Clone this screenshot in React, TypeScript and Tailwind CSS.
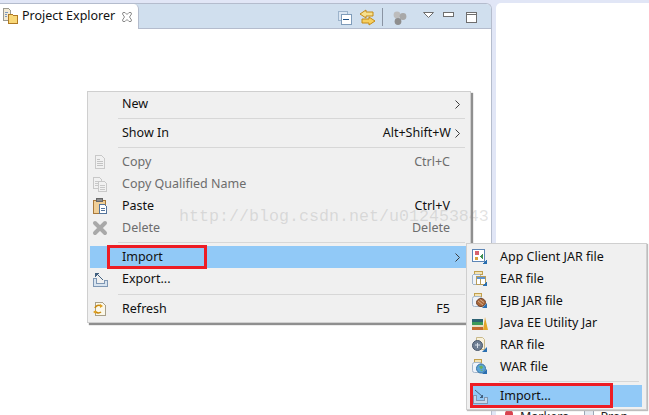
import React from "react";

const CornerArrow = () => <path d="M15 15 h-5 l5 -5 z" fill="#2a6fb0" />;

const PageIcon = ({ dim = false }: { dim?: boolean }) => (
  <svg width="16" height="16" viewBox="0 0 16 16" shapeRendering="crispEdges">
    <g opacity={dim ? 0.45 : 1}>
      <path d="M3.5 1.5 h6 l3 3 v10 h-9 z" fill="#f4f4f4" stroke="#9a9a9a" />
      <path d="M5 5h3M5 7h6M5 9h6M5 11h6" stroke="#8e8e8e" />
    </g>
  </svg>
);

const CopyNameIcon = () => (
  <svg width="16" height="16" viewBox="0 0 16 16" shapeRendering="crispEdges">
    <g opacity="0.4" stroke="#8e8e8e">
      <path d="M1.5 1.5 h6 l2 2 v9 h-8 z" fill="#f4f4f4" />
      <path d="M6.5 5.5 h6 l2 2 v8 h-8 z" fill="#f4f4f4" />
      <path d="M3 5h3M3 7h3M3 9h3M8 9h5M8 11h5M8 13h5" />
    </g>
  </svg>
);

const PasteIcon = () => (
  <svg width="16" height="18" viewBox="0 0 16 18" shapeRendering="crispEdges">
    <rect x="1.5" y="3.5" width="12" height="13" fill="#f0cf98" stroke="#a9793b" />
    <rect x="4.5" y="1.5" width="6" height="3" fill="#8d8d8d" stroke="#666" />
    <path d="M7.5 7.5 h5 l2 2 v7 h-7 z" fill="#fff" stroke="#54749c" />
    <path d="M9 11h4M9 13h4" stroke="#54749c" />
  </svg>
);

const DeleteIcon = () => (
  <svg width="16" height="16" viewBox="0 0 16 16">
    <path d="M3 3 L13 13 M13 3 L3 13" stroke="#a9a9a9" strokeWidth="4" strokeLinecap="round" />
  </svg>
);

const ImportIcon = () => (
  <svg width="16" height="15" viewBox="0 0 16 15" shapeRendering="crispEdges">
    <path d="M1.5 6.5 h3 v5 h8 v-3 h3 v6 h-14 z" fill="#c7d8ea" stroke="#7e97b4" />
    <path d="M3 1 L11 8" stroke="#42607f" shapeRendering="auto" />
    <path d="M11 9 h-4 l4 -4 z" fill="#42607f" />
  </svg>
);

const ExportIcon = () => (
  <svg width="16" height="15" viewBox="0 0 16 15" shapeRendering="crispEdges">
    <path d="M1.5 6.5 h3 v5 h8 v-3 h3 v6 h-14 z" fill="#d7e3ef" stroke="#7e97b4" />
    <path d="M11 8 L5 2" stroke="#42607f" shapeRendering="auto" />
    <path d="M3 1 h4 l-4 4 z" fill="#42607f" />
  </svg>
);

const RefreshIcon = () => (
  <svg width="16" height="16" viewBox="0 0 16 16">
    <path d="M3.5 1.5 h7 l3 3 v10 h-10 z" fill="#fbf8ea" stroke="#a8a08a" shapeRendering="crispEdges" />
    <path d="M3 7 a4 4 0 0 1 6 -2 M9 11 a4 4 0 0 1 -6 -1" fill="none" stroke="#c98a10" strokeWidth="1.6" />
    <path d="M8 3 l3 2 l-3 2 z M4 9 l-3 2 l3 2 z" fill="#e0a020" />
  </svg>
);

const AppClientIcon = () => (
  <svg width="16" height="16" viewBox="0 0 16 16" shapeRendering="crispEdges">
    <rect x="0.5" y="0.5" width="12" height="12" fill="#fff" stroke="#5d86b6" />
    <rect x="3" y="2" width="4" height="4" fill="#d8626e" />
    <rect x="3" y="8" width="3" height="3" fill="#d9a13a" />
    <path d="M11 5 l-3 2.5 l3 2.5 z" fill="#3d8f52" />
    <CornerArrow />
  </svg>
);

const EarIcon = () => (
  <svg width="16" height="16" viewBox="0 0 16 16" shapeRendering="crispEdges">
    <rect x="2.5" y="0.5" width="8" height="3" fill="#f3e3b4" stroke="#c2a04e" />
    <rect x="0.5" y="3.5" width="8" height="10" rx="2" fill="#eef3fa" stroke="#a3b6cc" />
    <rect x="4.5" y="5.5" width="9" height="8" fill="#fff" stroke="#b89c5a" />
    <rect x="5" y="6" width="8" height="2" fill="#5f93cc" />
    <path d="M8 8v5" stroke="#b89c5a" />
    <CornerArrow />
  </svg>
);

const EjbIcon = () => (
  <svg width="16" height="16" viewBox="0 0 16 16">
    <rect x="2.5" y="0.5" width="7" height="3" fill="#f3e3b4" stroke="#c2a04e" />
    <rect x="0.5" y="3.5" width="9" height="10" rx="2" fill="#eef3fa" stroke="#a3b6cc" />
    <ellipse cx="9" cy="9.5" rx="4.5" ry="4" fill="#a9683c" stroke="#6f4026" />
    <path d="M6 8l5 4M8 6.5l4 3" stroke="#e0c0a0" strokeWidth="0.8" />
    <CornerArrow />
  </svg>
);

const JavaIcon = () => (
  <svg width="16" height="15" viewBox="0 0 16 15" shapeRendering="crispEdges">
    <rect x="0" y="3" width="11" height="3" fill="#2d6273" />
    <rect x="0" y="6" width="11" height="3" fill="#3c9a5a" />
    <rect x="0" y="9" width="11" height="2" fill="#e8e0c8" />
    <rect x="0" y="11" width="11" height="3" fill="#c46a30" />
    <path d="M11 14 L13 1 L16 14 z" fill="#e2a62a" shapeRendering="auto" />
  </svg>
);

const RarIcon = () => (
  <svg width="16" height="16" viewBox="0 0 16 16">
    <path d="M4.5 0.5 h6 l2 2 v10 h-8 z" fill="#f8f1dc" stroke="#c9b98a" />
    <circle cx="5.5" cy="8.5" r="5" fill="#6f7f94" stroke="#48566a" />
    <path d="M3 8h5M5.5 6v5" stroke="#d7dfe8" />
    <CornerArrow />
  </svg>
);

const WarIcon = () => (
  <svg width="16" height="16" viewBox="0 0 16 16">
    <rect x="2.5" y="0.5" width="7" height="3" fill="#f3e3b4" stroke="#c2a04e" />
    <rect x="0.5" y="3.5" width="9" height="10" rx="2" fill="#eef3fa" stroke="#a3b6cc" />
    <circle cx="9" cy="9.5" r="4.5" fill="#5aa5d8" stroke="#3b74a3" />
    <path d="M7 7.5 l3 -1 l1 2 l-2 2 z M8 12 l2 -1 l1 1 z" fill="#6cb05a" />
    <CornerArrow />
  </svg>
);

const Chevron = () => (
  <svg width="5" height="9" viewBox="0 0 5 9" className="shrink-0">
    <path d="M0.5 0.5 L4.5 4.5 L0.5 8.5" fill="none" stroke="#3c3c3c" strokeWidth="1" />
  </svg>
);

type Row = {
  label: string;
  icon?: React.ReactNode;
  accel?: string;
  sub?: boolean;
  dim?: boolean;
  active?: boolean;
  gutter?: string;
};

const MenuRow = ({ label, icon, accel, sub, dim, active, gutter = "w-[32px] pl-[2px]" }: Row) => (
  <div className={`flex h-[22px] items-center ${active ? "bg-[#91c9f7]" : ""} ${dim ? "text-[#6d6d6d]" : "text-[#111]"}`}>
    <div className={`flex shrink-0 items-center ${gutter}`}>{icon}</div>
    <span>{label}</span>
    {accel && <span className={`ml-auto ${sub ? "mr-[4px]" : "mr-[18px]"}`}>{accel}</span>}
    {sub && (
      <span className={`mr-[8px] ${accel ? "" : "ml-auto"}`}>
        <Chevron />
      </span>
    )}
  </div>
);

const Sep = ({ h = "h-[7px]", left = "ml-[28px]" }: { h?: string; left?: string }) => (
  <div className={`flex items-center pr-[3px] ${h} ${left}`}>
    <div className="h-px w-full bg-[#d7d7d7]" />
  </div>
);

const Toolbar = () => (
  <div className="ml-auto flex h-full items-start">
    <svg width="14" height="14" viewBox="0 0 14 14" className="mt-[7px]" shapeRendering="crispEdges">
      <rect x="0.5" y="0.5" width="9" height="9" fill="#dbe6f2" stroke="#9db4cc" />
      <rect x="3.5" y="3.5" width="10" height="10" fill="#fff" stroke="#7f9cba" />
      <path d="M5 8.5h6" stroke="#1b4f86" strokeWidth="1.5" />
    </svg>
    <svg width="17" height="17" viewBox="0 0 17 17" className="ml-[7px] mt-[5px]">
      <path d="M7 1 L1 5 L7 9 V7 H14 V3 H7 Z" fill="#f7e08c" stroke="#c48a14" />
      <path d="M10 8 L16 12 L10 16 V14 H3 V10 H10 Z" fill="#f7d060" stroke="#c48a14" />
    </svg>
    <div className="ml-[6px] mt-[4px] h-[18px] w-px bg-[#8a94a3]" />
    <svg width="14" height="14" viewBox="0 0 14 14" className="ml-[10px] mt-[7px]">
      <circle cx="4" cy="4" r="3.4" fill="#bdbdbd" />
      <circle cx="10" cy="5.5" r="3.4" fill="#a8a8a8" />
      <circle cx="5" cy="10.5" r="3.4" fill="#8e8e8e" />
    </svg>
    <svg width="11" height="6" viewBox="0 0 11 6" className="ml-[16px] mt-[8px]">
      <path d="M0.5 0.5 H10.5 L5.5 5.5 Z" fill="#fff" stroke="#6e6e6e" />
    </svg>
    <svg width="11" height="5" viewBox="0 0 11 5" className="ml-[9px] mt-[8px]" shapeRendering="crispEdges">
      <rect x="0.5" y="0.5" width="10" height="4" fill="#fff" stroke="#6e6e6e" />
    </svg>
    <svg width="11" height="11" viewBox="0 0 11 11" className="ml-[12px] mt-[8px]" shapeRendering="crispEdges">
      <rect x="0.5" y="0.5" width="10" height="10" fill="#fff" stroke="#6e6e6e" />
      <path d="M1 2.5h9" stroke="#6e6e6e" />
    </svg>
  </div>
);

const subGutter = "w-[29px] pl-[1px]";

export default function App() {
  return (
    <div
      className="relative flex h-[415px] w-[649px] overflow-hidden bg-[#e1e6f6] pt-[3px] text-[12.5px]"
      style={{ fontFamily: '"Noto Sans", "Liberation Sans", sans-serif' }}
    >
      {/* left view */}
      <div className="flex w-[492px] shrink-0 flex-col overflow-hidden rounded-tr-[6px] border-r border-t border-[#b4bccd] bg-white">
        <div className="flex h-[25px] shrink-0 border-b border-[#b4bccd] bg-[#d0dfee] pr-[14px]">
          <div className="flex h-[25px] w-[139px] items-center rounded-tr-[5px] border-r border-[#b4bccd] bg-white pl-[3px]">
            <svg width="16" height="16" viewBox="0 0 16 16" className="mb-[1px]" shapeRendering="crispEdges">
              <path d="M0.5 0.5 h5 l2 2 v10 h-7 z" fill="#f3ead4" stroke="#9c9a90" />
              <path d="M2 4h3M2 6h2M2 8h2" stroke="#7a97c0" />
              <path d="M5.5 6.5 h4 l1 1 h4 v8 h-9 z" fill="#f9d878" stroke="#b07a24" />
            </svg>
            <span className="ml-[3px] text-[#111]">Project Explorer</span>
            <svg width="10" height="10" viewBox="0 0 10 10" className="ml-[7px]">
              <path d="M1 0.5 L3 0.5 L5 2.5 L7 0.5 L9 0.5 L9.5 2 L7.5 5 L9.5 8 L9 9.5 L7 9.5 L5 7.5 L3 9.5 L1 9.5 L0.5 8 L2.5 5 L0.5 2 Z" fill="#fff" stroke="#8a8a8a" />
            </svg>
          </div>
          <Toolbar />
        </div>
        <div className="flex-1" />
      </div>

      {/* right view */}
      <div className="ml-[4px] flex flex-1 flex-col overflow-hidden rounded-tl-[5px] bg-white">
        <div className="flex-1" />
        <div className="flex h-[5px] items-start overflow-hidden pl-[9px] text-[#222]">
          <span className="h-[8px] w-[8px] rounded-full bg-[#d9424e]" />
          <span className="ml-[7px] leading-[14px]">Markers</span>
          <span className="ml-[16px] h-[8px] w-[10px] border border-[#9aa6b5] bg-[#e4eaf2]" />
          <span className="ml-[6px] leading-[14px]">Prop</span>
        </div>
      </div>

      {/* context menu */}
      <div className="absolute left-[87px] top-[91px] h-[232px] w-[384px] border border-[#cfcfcf] bg-[#f0f0f0] px-[2px] py-px shadow-[2px_2px_1px_#8f8f8f]">
        <MenuRow label="New" sub />
        <Sep />
        <MenuRow label="Show In" accel="Alt+Shift+W" sub />
        <Sep />
        <MenuRow label="Copy" dim icon={<PageIcon dim />} accel="Ctrl+C" />
        <MenuRow label="Copy Qualified Name" dim icon={<CopyNameIcon />} />
        <MenuRow label="Paste" icon={<PasteIcon />} accel="Ctrl+V" />
        <MenuRow label="Delete" dim icon={<DeleteIcon />} accel="Delete" />
        <Sep />
        <MenuRow label="Import" sub active />
        <MenuRow label="Export..." icon={<ExportIcon />} />
        <Sep h="h-[8px]" />
        <MenuRow label="Refresh" icon={<RefreshIcon />} accel="F5" />
      </div>

      {/* submenu */}
      <div className="absolute left-[466px] top-[243px] h-[167px] w-[181px] border border-[#cfcfcf] bg-[#f0f0f0] px-[4px] pb-px pt-[2px] shadow-[1px_1px_1px_#bdbdbd]">
        <MenuRow label="App Client JAR file" icon={<AppClientIcon />} gutter={subGutter} />
        <MenuRow label="EAR file" icon={<EarIcon />} gutter={subGutter} />
        <MenuRow label="EJB JAR file" icon={<EjbIcon />} gutter={subGutter} />
        <MenuRow label="Java EE Utility Jar" icon={<JavaIcon />} gutter={subGutter} />
        <MenuRow label="RAR file" icon={<RarIcon />} gutter={subGutter} />
        <MenuRow label="WAR file" icon={<WarIcon />} gutter={subGutter} />
        <Sep />
        <MenuRow label="Import..." active icon={<ImportIcon />} gutter={subGutter} />
      </div>

      {/* red annotation boxes */}
      <div className="absolute left-[107px] top-[245px] h-[24px] w-[100px] border-[3px] border-[#ed1c24]" />
      <div className="absolute left-[470px] top-[383px] h-[25px] w-[143px] border-[3px] border-[#ed1c24]" />

      {/* watermark */}
      <div
        className="pointer-events-none absolute left-[179px] top-[207px] whitespace-pre text-[16.67px] leading-[20px] text-[#8c8c8c]/25"
        style={{ fontFamily: '"Liberation Mono", monospace' }}
      >
        http://blog.csdn.net/u012453843
      </div>
    </div>
  );
}
